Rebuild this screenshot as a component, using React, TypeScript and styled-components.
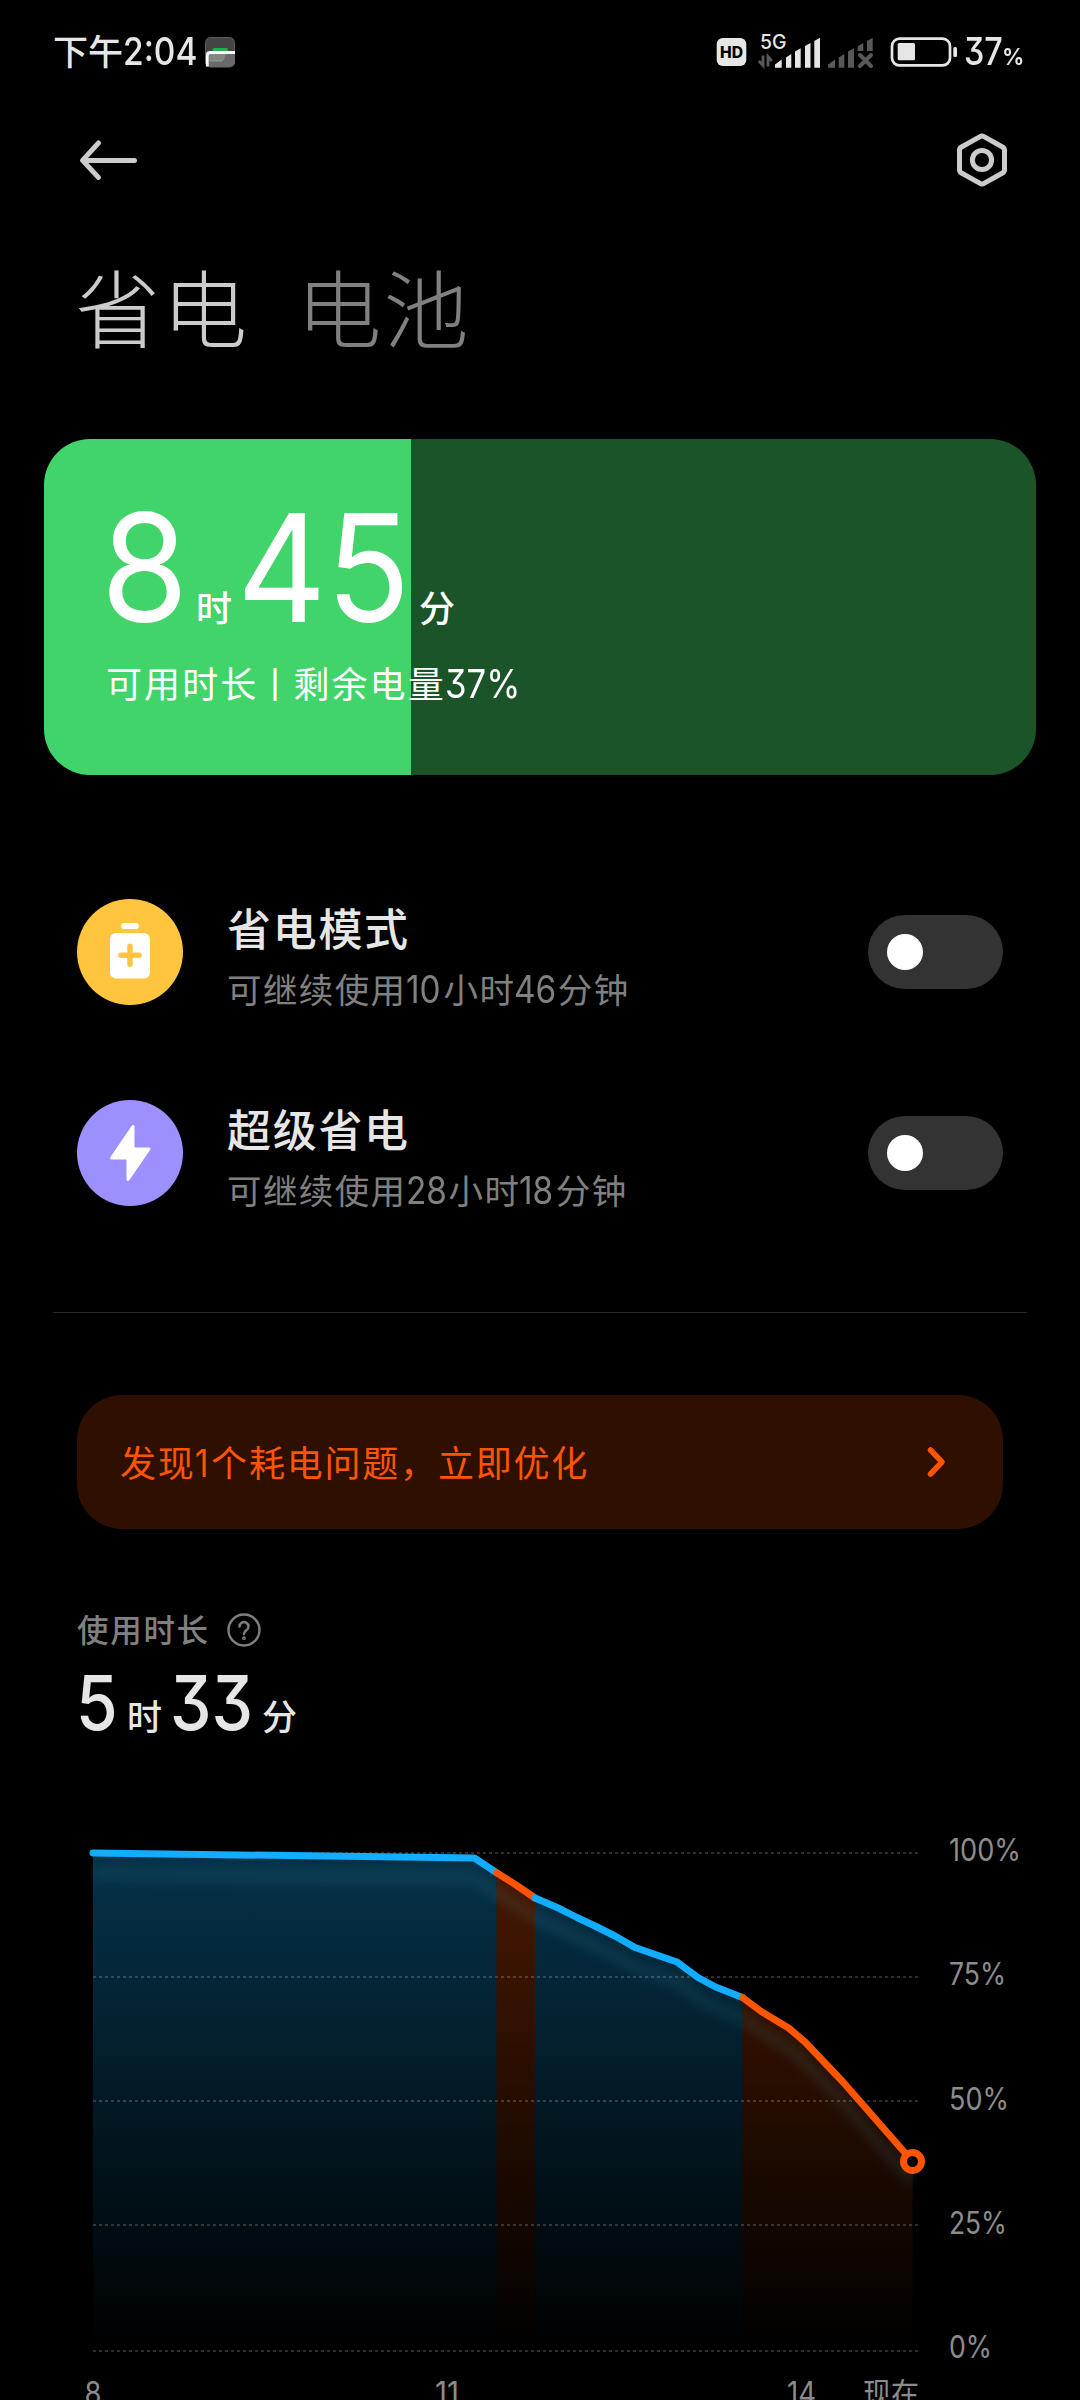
import React from "react";
import styled, { createGlobalStyle } from "styled-components";

const GlobalStyle = createGlobalStyle`
  body { margin: 0; background: #000; }
  * { box-sizing: border-box; }
`;

const cjk = `"Noto Sans CJK SC", sans-serif`;
const latin = `Inter, "Noto Sans CJK SC", sans-serif`;

const Screen = styled.main`
  width: 1080px;
  height: 2400px;
  overflow: hidden;
  background: #000;
  color: #e6e6e6;
  font-family: ${cjk};
  display: flex;
  flex-direction: column;
`;

const Line = styled.div<{ $h: number }>`
  display: flex;
  align-items: baseline;
  height: ${(p) => p.$h}px;
  line-height: 1;
  white-space: nowrap;
`;

const Han = styled.span<{ $size: number; $track?: number; $weight?: number; $ml?: number }>`
  font-family: ${cjk};
  font-size: ${(p) => p.$size}px;
  font-weight: ${(p) => p.$weight ?? 400};
  letter-spacing: ${(p) => p.$track ?? 0}px;
  margin-left: ${(p) => p.$ml ?? 0}px;
  line-height: 1;
`;

const Num = styled.span<{ $size: number; $w: number; $sx?: number; $weight?: number; $track?: number; $ml?: number }>`
  display: inline-block;
  width: ${(p) => p.$w}px;
  margin-left: ${(p) => p.$ml ?? 0}px;
  font-family: ${latin};
  font-size: ${(p) => p.$size}px;
  font-weight: ${(p) => p.$weight ?? 400};
  font-feature-settings: "cv09" 1;
  letter-spacing: ${(p) => p.$track ?? 0}px;
  line-height: 1;
  transform: scaleX(${(p) => p.$sx ?? 0.88});
  transform-origin: 0 50%;
`;

const StatusBar = styled.header`
  height: 104px;
  padding: 0 57px 0 53px;
  display: flex;
  justify-content: space-between;
  align-items: flex-start;
`;

const StatusSide = styled.div`
  display: flex;
  align-items: flex-start;
  padding-top: 32px;
`;

const StatusGlyphs = styled.svg`
  margin-top: -2px;
`;

const AppBar = styled.nav`
  height: 112px;
  padding: 0 72px 0 79px;
  display: flex;
  justify-content: space-between;
  align-items: center;
`;

const IconButton = styled.button`
  display: flex;
  padding: 0;
  border: 0;
  background: none;
`;

const Tabs = styled.div`
  display: flex;
  height: 223px;
  padding: 46px 0 0 75px;
  gap: 47px;
`;

const Tab = styled.span<{ $active?: boolean }>`
  font-size: 85px;
  font-weight: 300;
  line-height: 1;
  letter-spacing: 2.2px;
  color: ${(p) => (p.$active ? "#cccccc" : "#808080")};
`;

const BatteryCard = styled.section<{ $level: number }>`
  width: 992px;
  height: 336px;
  margin: 0 44px;
  padding: 54px 0 0 62px;
  border-radius: 46px;
  color: #fff;
  background: linear-gradient(to right, #41d46a ${(p) => p.$level}%, #1b5429 ${(p) => p.$level}%);
`;

const Modes = styled.section`
  display: flex;
  flex-direction: column;
  gap: 95px;
  padding: 124px 77px 106px;
`;

const ModeRow = styled.div`
  display: flex;
  align-items: center;
  height: 106px;
`;

const ModeIcon = styled.div<{ $color: string }>`
  width: 106px;
  height: 106px;
  border-radius: 50%;
  background: ${(p) => p.$color};
`;

const ModeText = styled.div`
  flex: 1;
  height: 106px;
  padding: 6px 0 0 44px;
`;

const Muted = styled.div`
  color: #808080;
`;

const Switch = styled.div`
  width: 135px;
  height: 74px;
  padding: 19px;
  border-radius: 37px;
  background: #333;
`;

const Knob = styled.div`
  width: 36px;
  height: 36px;
  border-radius: 50%;
  background: #fff;
`;

const Divider = styled.hr`
  width: 974px;
  height: 1px;
  margin: 0 53px;
  border: 0;
  background: #2b2b2b;
  flex: none;
`;

const Notice = styled.section`
  display: flex;
  justify-content: space-between;
  width: 926px;
  height: 134px;
  flex: none;
  margin: 82px 77px 0;
  padding: 48px 57px 0 43px;
  border-radius: 45px;
  background: #2e0f00;
  color: #ff5500;
`;

const Usage = styled.section`
  height: 244px;
  flex: none;
  padding: 84px 0 0 77px;
`;

const UsageLabel = styled.div`
  display: flex;
  align-items: flex-start;
  gap: 17.5px;
  height: 52px;
  color: #808080;
`;

const ChartBox = styled.section`
  height: 627px;
  flex: none;
  svg { display: block; }
`;

const AxisText = styled.text`
  font-family: ${latin};
  font-size: 31px;
  font-weight: 400;
  fill: #8c8c8c;
`;

type Pt = [number, number];

const series: { color: string; fill: string; points: Pt[] }[] = [
  { color: "#12adff", fill: "url(#blueFill)", points: [[93, 80], [474.3, 85], [496.6, 99.7]] },
  { color: "#ff5500", fill: "url(#orangeFill)", points: [[496.6, 99.7], [516, 112], [535, 125]] },
  {
    color: "#12adff",
    fill: "url(#blueFill)",
    points: [[535, 125], [560, 135.8], [577, 144.5], [595, 153], [615, 163], [635, 174.5], [677, 189], [698, 204.5], [715.6, 214], [742.5, 224.5]],
  },
  {
    color: "#ff5500",
    fill: "url(#orangeFill)",
    points: [[742.5, 224.5], [762, 239], [788.6, 255], [805, 269], [843, 309], [864, 333], [912.5, 388.5]],
  },
];

const toStr = (pts: Pt[]) => pts.map((p) => p.join(",")).join(" ");
const glow = series.flatMap((s) => s.points).map(([x, y]) => [x, y + 20] as Pt);

const yTicks = [
  { y: 80, label: "100%", w: 71 },
  { y: 204, label: "75%", w: 56 },
  { y: 328, label: "50%", w: 59 },
  { y: 452, label: "25%", w: 57 },
  { y: 578, label: "0%", w: 42 },
];

const Chart = () => (
  <svg width="1080" height="627" viewBox="0 0 1080 627">
    <defs>
      <linearGradient id="blueFill" gradientUnits="userSpaceOnUse" x1="0" y1="80" x2="0" y2="578">
        <stop offset="0" stopColor="#12adff" stopOpacity="0.29" />
        <stop offset="1" stopColor="#12adff" stopOpacity="0" />
      </linearGradient>
      <linearGradient id="orangeFill" gradientUnits="userSpaceOnUse" x1="0" y1="80" x2="0" y2="578">
        <stop offset="0" stopColor="#ff5500" stopOpacity="0.29" />
        <stop offset="1" stopColor="#ff5500" stopOpacity="0" />
      </linearGradient>
      <filter id="soft" filterUnits="userSpaceOnUse" x="40" y="40" width="940" height="500">
        <feGaussianBlur stdDeviation="5.5" />
      </filter>
    </defs>
    {series.map((s, i) => (
      <polygon
        key={i}
        points={`${s.points[0][0]},578 ${toStr(s.points)} ${s.points[s.points.length - 1][0]},578`}
        fill={s.fill}
      />
    ))}
    <polyline points={toStr(glow)} fill="none" stroke="#3a9cb4" strokeOpacity="0.13" strokeWidth="12" filter="url(#soft)" />
    {yTicks.map((t) => (
      <line key={t.y} x1="93" x2="918" y1={t.y} y2={t.y} stroke="#fff" strokeOpacity="0.18" strokeWidth="2" strokeDasharray="3 3" />
    ))}
    {series.map((s, i) => (
      <polyline key={i} points={toStr(s.points)} fill="none" stroke={s.color} strokeWidth="7" strokeLinecap="round" strokeLinejoin="round" />
    ))}
    <circle cx="912.5" cy="388.5" r="9" fill="#000" stroke="#ff5500" strokeWidth="7" />
    {yTicks.map((t, i) => (
      <AxisText key={t.label} x="949" y={88.3 + i * 124.1} textLength={t.w + 1} lengthAdjust="spacingAndGlyphs">
        {t.label}
      </AxisText>
    ))}
    <AxisText x="84.5" y="631" textLength="17" lengthAdjust="spacingAndGlyphs">8</AxisText>
    <AxisText x="435" y="631" textLength="24" lengthAdjust="spacingAndGlyphs">11</AxisText>
    <AxisText x="787" y="631" textLength="29" lengthAdjust="spacingAndGlyphs">14</AxisText>
    <AxisText x="863" y="632" textLength="56" lengthAdjust="spacingAndGlyphs">现在</AxisText>
  </svg>
);

const StatusIcons = () => (
  <StatusGlyphs width="242" height="44" viewBox="716 30 242 44">
    <rect x="716.7" y="38" width="29.6" height="28" rx="6" fill="#e6e6e6" />
    <text x="731.5" y="57.7" textAnchor="middle" fontFamily="Inter, sans-serif" fontWeight="800" fontSize="15.5" textLength="23" lengthAdjust="spacingAndGlyphs" fill="#000">HD</text>
    <text x="760" y="49" fontFamily="Inter, sans-serif" fontWeight="500" fontSize="20" textLength="26.5" lengthAdjust="spacingAndGlyphs" fill="#e6e6e6">5G</text>
    <g fill="none" stroke="#595959" strokeWidth="2.8">
      <path d="M763 55.5V65.5L758.8 61M768 66.5V56.5L771.8 61" />
    </g>
    <g fill="#e6e6e6">
      <path d="M775 67.7V64.5L781.7 59.5V67.7zM786 67.7V57.5L791.3 54V67.7zM795 67.7V51.5L800.7 48.2V67.7zM805 67.7V46L810.5 43V67.7zM814.3 67.7V41L820 37.7V67.7z" />
    </g>
    <g fill="#595959">
      <path d="M828 67.7V64.5L835 59.5V67.7zM838.7 67.7V57.5L844.3 54V67.7zM848 67.7V51.5L854 48.2V67.7zM857.7 51V46.5L863.3 43V51zM867 51V41L872.7 37.7V51z" />
    </g>
    <path d="M860 55L871 66M871 55L860 66" stroke="#595959" strokeWidth="4" strokeLinecap="round" />
    <rect x="892" y="38.7" width="58" height="26.7" rx="7.5" fill="none" stroke="#e6e6e6" strokeWidth="2.7" />
    <rect x="897.7" y="43" width="17.3" height="17.3" rx="1.5" fill="#e6e6e6" />
    <rect x="953.3" y="47" width="3.7" height="10" rx="1.5" fill="#e6e6e6" />
  </StatusGlyphs>
);

const NotifySvg = styled.svg`
  margin: 5px 0 0 8px;
`;

const NotifyIcon = () => (
  <NotifySvg width="30" height="31" viewBox="0 0 30 31">
    <rect x="0.5" y="0.5" width="29" height="29.5" rx="5" fill="#444" stroke="#5c5c5c" />
    <path d="M1 15H30V25a5 5 0 0 1-5 5H6a5 5 0 0 1-5-5z" fill="#6a6a6a" />
    <path d="M4 17H21L17 24H4z" fill="#858585" />
    <path d="M5 24H17L19.5 20" fill="none" stroke="#a8a8a8" strokeWidth="0.7" />
    <path d="M7.5 14V12.5q0-1.5 1.5-1.5H21.5q1.5 0 1.5 1.5V14z" fill="#1faf4b" />
    <path d="M2.3 29.5V18.5q0-3 3-3H30" fill="none" stroke="#fff" strokeWidth="2.8" />
  </NotifySvg>
);

export default function App() {
  return (
    <>
      <GlobalStyle />
      <Screen>
        <StatusBar>
          <StatusSide>
            <Line $h={40}>
              <Han $size={35} $weight={500}>下午</Han>
              <Num $size={38.5} $w={74} $sx={0.87} $weight={500}>2:04</Num>
            </Line>
            <NotifyIcon />
          </StatusSide>
          <StatusSide>
            <StatusIcons />
            <Line $h={40}>
              <Num $size={38.5} $w={38} $ml={6} $sx={0.84} $weight={500}>37</Num>
              <Num $size={23.5} $w={21} $sx={0.95} $weight={600}>%</Num>
            </Line>
          </StatusSide>
        </StatusBar>
        <AppBar>
          <IconButton aria-label="返回">
            <svg width="60" height="44" viewBox="0 0 60 44" fill="none" stroke="#ccc" strokeWidth="5" strokeLinecap="round" strokeLinejoin="round">
              <path d="M19.5 5L3.5 22.4L19.5 39.5M4 22.4H55.5" />
            </svg>
          </IconButton>
          <IconButton aria-label="设置">
            <svg width="52" height="56" viewBox="0 0 52 56" fill="none" stroke="#ccc" strokeWidth="5" strokeLinejoin="round">
              <path d="M24 4.6q2-1.2 4 0L46.5 15q2 1.2 2 3.3V37.7q0 2.1-2 3.3L28 51.4q-2 1.2-4 0L5.5 41q-2-1.2-2-3.3V18.3q0-2.1 2-3.3z" />
              <circle cx="26" cy="28" r="9.6" />
            </svg>
          </IconButton>
        </AppBar>
        <Tabs>
          <Tab $active>省电</Tab>
          <Tab>电池</Tab>
        </Tabs>
        <BatteryCard $level={37}>
          <Line $h={171}>
            <Num $size={150} $w={94} $ml={-5} $sx={0.94}>8</Num>
            <Han $size={36} $weight={500} $ml={1}>时</Han>
            <Num $size={150} $w={182} $ml={5} $sx={0.922}>45</Num>
            <Han $size={36} $weight={500}>分</Han>
          </Line>
          <Line $h={40}>
            <Han $size={36} $track={2.1}>可用时长</Han>
            <Han $size={36} $ml={-1.5}>丨</Han>
            <Han $size={36} $track={2.1} $ml={0.5}>剩余电量</Han>
            <Num $size={39.5} $w={76} $ml={-1} $sx={0.88}>37%</Num>
          </Line>
        </BatteryCard>
        <Modes>
          <ModeRow>
            <ModeIcon $color="#ffc53f">
              <svg width="106" height="106" viewBox="0 0 106 106">
                <rect x="44.2" y="24" width="17.6" height="6" rx="2.5" fill="#fff" />
                <rect x="33" y="34" width="40" height="45.5" rx="6" fill="#fff" />
                <path d="M44 56.3H62M53 47.3V65.3" stroke="#ffc53f" strokeWidth="5.5" strokeLinecap="round" />
              </svg>
            </ModeIcon>
            <ModeText>
              <Line $h={66}><Han $size={44} $track={1.7} $weight={500}>省电模式</Han></Line>
              <Muted>
                <Line $h={38}>
                  <Han $size={34.5} $track={1.4}>可继续使用</Han>
                  <Num $size={37.5} $w={37} $ml={-1} $sx={0.89}>10</Num>
                  <Han $size={34.5} $track={1.4} $ml={1}>小时</Han>
                  <Num $size={37.5} $w={42.5} $ml={-1} $sx={0.89}>46</Num>
                  <Han $size={34.5} $track={1.4} $ml={1}>分钟</Han>
                </Line>
              </Muted>
            </ModeText>
            <Switch><Knob /></Switch>
          </ModeRow>
          <ModeRow>
            <ModeIcon $color="#9c90ff">
              <svg width="106" height="106" viewBox="0 0 106 106">
                <path d="M56 26.5V49H72L51 79.5V58H34.5z" fill="#fff" stroke="#fff" strokeWidth="3" strokeLinejoin="round" />
              </svg>
            </ModeIcon>
            <ModeText>
              <Line $h={66}><Han $size={44} $track={1.7} $weight={500}>超级省电</Han></Line>
              <Muted>
                <Line $h={38}>
                  <Han $size={34.5} $track={1.4}>可继续使用</Han>
                  <Num $size={37.5} $w={42} $ml={-1} $sx={0.89}>28</Num>
                  <Han $size={34.5} $track={1.4} $ml={1}>小时</Han>
                  <Num $size={37.5} $w={35.5} $ml={-1} $sx={0.89}>18</Num>
                  <Han $size={34.5} $track={1.4} $ml={1}>分钟</Han>
                </Line>
              </Muted>
            </ModeText>
            <Switch><Knob /></Switch>
          </ModeRow>
        </Modes>
        <Divider />
        <Notice>
          <Line $h={40}>
            <Han $size={36} $track={1.8}>发现</Han>
            <Num $size={38.5} $w={15.5} $ml={-1} $sx={0.87}>1</Num>
            <Han $size={36} $track={1.8} $ml={1}>个耗电问题，立即优化</Han>
          </Line>
          <svg width="20" height="36" viewBox="0 0 20 36" fill="none" stroke="#ff5500" strokeWidth="5.5" strokeLinecap="round" strokeLinejoin="round">
            <path d="M4.5 7L16 19L4.5 31" />
          </svg>
        </Notice>
        <Usage>
          <UsageLabel>
            <Han $size={31.5} $track={1.7} $weight={500}>使用时长</Han>
            <svg width="34" height="34" viewBox="0 0 34 34" fill="none" stroke="#808080" strokeWidth="2.4" strokeLinecap="round">
              <circle cx="17" cy="17" r="15.5" />
              <path d="M12.5 13.5a4.5 4.5 0 1 1 6.8 3.9q-2.3 1.4-2.3 3.6" />
              <circle cx="17" cy="25.2" r="0.7" />
            </svg>
          </UsageLabel>
          <Line $h={80}>
            <Num $size={75} $w={51} $ml={-1} $sx={0.9} $weight={500}>5</Num>
            <Han $size={35} $weight={500}>时</Han>
            <Num $size={75} $w={92} $ml={8} $sx={0.88} $weight={500}>33</Num>
            <Han $size={35} $weight={500}>分</Han>
          </Line>
        </Usage>
        <ChartBox>
          <Chart />
        </ChartBox>
      </Screen>
    </>
  );
}
